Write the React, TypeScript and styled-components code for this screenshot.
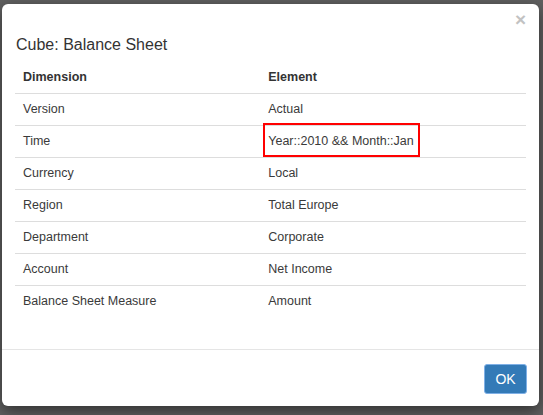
import styled, { createGlobalStyle } from 'styled-components';

const rows: { dimension: string; element: string; highlight?: boolean }[] = [
  { dimension: 'Version', element: 'Actual' },
  { dimension: 'Time', element: 'Year::2010 && Month::Jan', highlight: true },
  { dimension: 'Currency', element: 'Local' },
  { dimension: 'Region', element: 'Total Europe' },
  { dimension: 'Department', element: 'Corporate' },
  { dimension: 'Account', element: 'Net Income' },
  { dimension: 'Balance Sheet Measure', element: 'Amount' },
];

export default function App() {
  return (
    <>
      <GlobalStyle />
      <Backdrop>
        <Modal>
          <Header>
            <CloseRow>
              <Close aria-label="Close">×</Close>
            </CloseRow>
            <Title>Cube: Balance Sheet</Title>
          </Header>
          <Body>
            <Table>
              <thead>
                <tr>
                  <Th>Dimension</Th>
                  <Th>Element</Th>
                </tr>
              </thead>
              <tbody>
                {rows.map((r) => (
                  <Row key={r.dimension}>
                    <Td>{r.dimension}</Td>
                    <Td>{r.highlight ? <Marked>{r.element}</Marked> : r.element}</Td>
                  </Row>
                ))}
              </tbody>
            </Table>
          </Body>
          <Footer>
            <OkButton>OK</OkButton>
          </Footer>
        </Modal>
      </Backdrop>
    </>
  );
}

const GlobalStyle = createGlobalStyle`
  html, body {
    margin: 0;
    padding: 0;
    background: #606060;
  }
  body {
    font-family: 'Liberation Sans', Arial, sans-serif;
    color: #333;
  }
`;

const Backdrop = styled.div`
  width: 543px;
  height: 415px;
  box-sizing: border-box;
  padding: 4px 4px 9px 2px;
  background: #606060;
  display: flex;
  align-items: flex-start;
`;

const Modal = styled.div`
  width: 537px;
  height: 402px;
  background: #fff;
  border-radius: 6px;
  box-shadow: 0 5px 15px rgba(0, 0, 0, 0.5);
  display: flex;
  flex-direction: column;
  overflow: hidden;
`;

const Header = styled.div`
  padding: 6px 13px 0 14px;
`;

const CloseRow = styled.div`
  display: flex;
  justify-content: flex-end;
  height: 20px;
`;

const Close = styled.span`
  font-size: 19px;
  font-weight: 700;
  line-height: 20px;
  color: #c2c2c2;
  cursor: pointer;
`;

const Title = styled.h4`
  margin: 4px 0 0;
  font-size: 16px;
  font-weight: 400;
  line-height: 22px;
  color: #333;
`;

const Body = styled.div`
  flex: 1;
  padding: 6px 13px 0;
`;

const Table = styled.table`
  width: 100%;
  border-collapse: collapse;
  font-size: 12.5px;
  line-height: 15px;
`;

const Th = styled.th`
  text-align: left;
  font-weight: 700;
  padding: 8px;
  border-bottom: 1px solid #ddd;
  width: 48%;
  & + & {
    width: auto;
  }
`;

const Row = styled.tr`
  & + & td {
    border-top: 1px solid #ddd;
  }
`;

const Td = styled.td`
  padding: 8px;
  color: #3a3a3a;
`;

const Marked = styled.span`
  position: relative;
  &::after {
    content: '';
    position: absolute;
    top: -11px;
    bottom: -9px;
    left: -5px;
    right: -6px;
    border: 2px solid #f00;
    pointer-events: none;
  }
`;

const Footer = styled.div`
  border-top: 1px solid #e5e5e5;
  padding: 14px 12px 12px 15px;
  display: flex;
  justify-content: flex-end;
`;

const OkButton = styled.button`
  width: 43px;
  height: 30px;
  background: #337ab7;
  color: #fff;
  border: 1px solid #7fb0e6;
  border-radius: 3px;
  font-family: 'Liberation Sans', Arial, sans-serif;
  font-size: 14px;
  padding: 0;
`;
